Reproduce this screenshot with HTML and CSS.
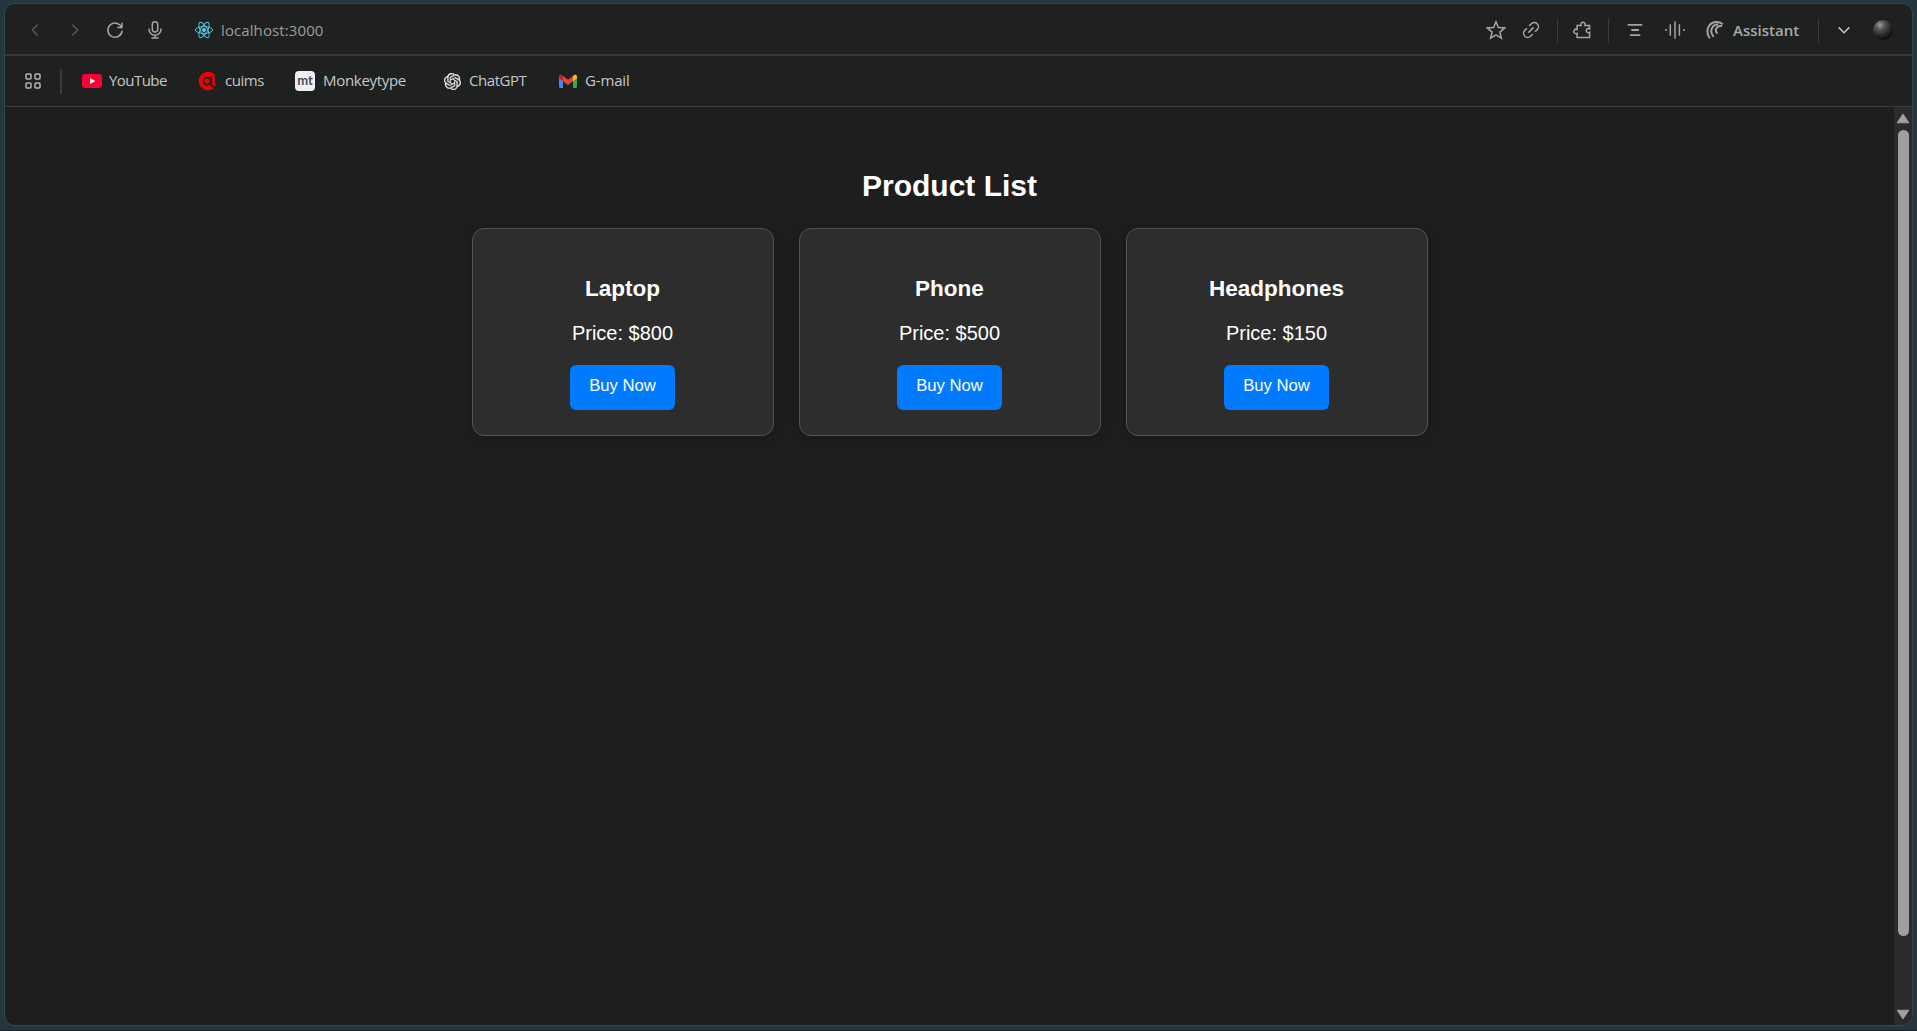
FILE: index.html
```html
<!DOCTYPE html>
<html lang="en">
<head>
<meta charset="utf-8">
<title>Product List</title>
<link rel="stylesheet" href="styles.css">
</head>
<body>
<div class="window">
  <header class="toolbar">
    <nav class="nav">
      <svg class="icon dim" viewBox="0 0 20 20"><path d="M12.8 4.5 7.3 10l5.5 5.5"/></svg>
      <svg class="icon dim" viewBox="0 0 20 20"><path d="M7.2 4.5 12.7 10l-5.5 5.5"/></svg>
      <svg class="icon" viewBox="0 0 20 20"><path d="M16.6 7.5A7.1 7.1 0 1 0 17.1 10.6M17 2.8v4.800h-4.800"/></svg>
      <svg class="icon" viewBox="0 0 20 20"><rect x="7.3" y="1.7" width="5.4" height="10.3" rx="2.7"/><path d="M4 8.5v.8a6 6 0 0 0 12 0v-.8M10 15.3V18M6.4 18h7.2"/></svg>
    </nav>
    <div class="address">
      <svg class="react" viewBox="0 0 20 20"><circle class="core" cx="10" cy="10" r="1.6"/><ellipse cx="10" cy="10" rx="8.6" ry="3.4"/><ellipse cx="10" cy="10" rx="8.6" ry="3.4" transform="rotate(60 10 10)"/><ellipse cx="10" cy="10" rx="8.6" ry="3.4" transform="rotate(120 10 10)"/></svg>
      <span class="url">localhost:3000</span>
    </div>
    <div class="actions">
      <svg class="icon star" viewBox="0 0 20 20"><path d="m10 1.700 2.400 5.800 6.300.5-4.800 4.100 1.500 6.100L10 14.900l-5.400 3.300 1.500-6.100L1.300 8l6.300-.5z"/></svg>
      <svg class="icon link" viewBox="0 0 20 20"><path d="M8.200 5.900 10.400 3.800a4 4 0 0 1 5.800 5.800l-2.200 2.200M11.800 14.100l-2.200 2.100a4 4 0 0 1-5.800-5.800L6 8.200M7.400 12.600l5.200-5.200"/></svg>
      <i class="rule"></i>
      <svg class="icon puzzle" viewBox="0 0 20 20"><path d="M4.100 5.400H8a2.200 2.200 0 1 1 4 0h4.600v3.400a2.100 2.100 0 1 0 0 3.500v5.200H4.100v-4.200a2.200 2.200 0 1 1 0-3.800z"/></svg>
      <i class="rule"></i>
      <svg class="icon lines" viewBox="0 0 20 20"><path d="M2.700 4.900h14.600M6.300 10h7.600M4.900 15.100h10.400"/></svg>
      <svg class="icon wave" viewBox="0 0 20 20"><path d="M1 9v2M5.300 4.200v11.600M10 1.300v17.400M14.400 4.200v11.600M19 9v2"/></svg>
      <svg class="icon swirl" viewBox="0 0 20 20"><path d="M4.700 18.200C-.2 11 3.300 2.700 11 2.100c2.800-.2 4.700.5 6.700 2.200M8.700 16.700C3.800 11.500 7 4.400 13.200 4.600M12.300 13.600c-3.200-4-.7-7.700 4.800-7.800"/></svg>
      <span class="assistant">Assistant</span>
      <i class="rule"></i>
      <svg class="icon chevron" viewBox="0 0 20 20"><path d="m4.700 7.400 5.300 5.300 5.300-5.300"/></svg>
      <i class="avatar"></i>
    </div>
  </header>
  <div class="bookmarks">
    <svg class="icon apps" viewBox="0 0 20 20"><rect x="3" y="3" width="5" height="5" rx="1"/><rect x="12" y="3" width="5" height="5" rx="1"/><rect x="3" y="12" width="5" height="5" rx="1"/><rect x="12" y="12" width="5" height="5" rx="1"/></svg>
    <i class="rule bright"></i>
    <a class="mark youtube"><svg viewBox="0 0 20 20"><rect y="3" width="20" height="14" rx="3.300" fill="#ff0033"/><path d="m8 7.100 5.200 2.900L8 12.900z" fill="#fff"/></svg><span>YouTube</span></a>
    <a class="mark cuims"><svg viewBox="0 0 20 20"><path fill="#f20000" d="M15.800 2.700A9.300 9.300 0 1 0 16 17.200l-2-2.600V4.500z"/><circle cx="9" cy="10.200" r="3.600" fill="none" stroke="#1f2120" stroke-width="1.900"/><path d="M13.100 5.500v8.200q0 1.700 1.400 2.300" fill="none" stroke="#1f2120" stroke-width="1.700"/><path d="M15.500 3.200v9.600q0 1.400 2 1.300" fill="none" stroke="#f20000" stroke-width="2.500"/></svg><span>cuims</span></a>
    <a class="mark monkey"><b class="mt">mt</b><span>Monkeytype</span></a>
    <a class="mark chat"><svg viewBox="0 0 24 24"><path fill="#ececec" stroke="#ececec" stroke-width=".4" d="M22.2819 9.8211a5.9847 5.9847 0 0 0-.5157-4.9108 6.0462 6.0462 0 0 0-6.5098-2.9A6.0651 6.0651 0 0 0 4.9807 4.1818a5.9847 5.9847 0 0 0-3.9977 2.9 6.0462 6.0462 0 0 0 .7427 7.0966 5.98 5.98 0 0 0 .511 4.9107 6.051 6.051 0 0 0 6.5146 2.9001A5.9847 5.9847 0 0 0 13.2599 24a6.0557 6.0557 0 0 0 5.7718-4.2058 5.9894 5.9894 0 0 0 3.9977-2.9001 6.0557 6.0557 0 0 0-.7475-7.0729zm-9.022 12.6081a4.4755 4.4755 0 0 1-2.8764-1.0408l.1419-.0804 4.7783-2.7582a.7948.7948 0 0 0 .3927-.6813v-6.7369l2.02 1.1686a.071.071 0 0 1 .038.052v5.5826a4.504 4.504 0 0 1-4.4945 4.4944zm-9.6607-4.1254a4.4708 4.4708 0 0 1-.5346-3.0137l.142.0852 4.783 2.7582a.7712.7712 0 0 0 .7806 0l5.8428-3.3685v2.3324a.0804.0804 0 0 1-.0332.0615L9.74 19.9502a4.4992 4.4992 0 0 1-6.1408-1.6464zM2.3408 7.8956a4.485 4.485 0 0 1 2.3655-1.9728V11.6a.7664.7664 0 0 0 .3879.6765l5.8144 3.3543-2.0201 1.1685a.0757.0757 0 0 1-.071 0l-4.8303-2.7865A4.504 4.504 0 0 1 2.3408 7.872zm16.5963 3.8558L13.1038 8.364 15.1192 7.2a.0757.0757 0 0 1 .071 0l4.8303 2.7913a4.4944 4.4944 0 0 1-.6765 8.1042v-5.6772a.79.79 0 0 0-.407-.667zm2.0107-3.0231l-.142-.0852-4.7735-2.7818a.7759.7759 0 0 0-.7854 0L9.409 9.2297V6.8974a.0662.0662 0 0 1 .0284-.0615l4.8303-2.7866a4.4992 4.4992 0 0 1 6.6802 4.66zM8.3065 12.863l-2.02-1.1638a.0804.0804 0 0 1-.038-.0567V6.0742a4.4992 4.4992 0 0 1 7.3757-3.4537l-.142.0805L8.704 5.459a.7948.7948 0 0 0-.3927.6813zm1.0976-2.3654l2.602-1.4998 2.6069 1.4998v2.9994l-2.5974 1.4997-2.6067-1.4997Z"/></svg><span>ChatGPT</span></a>
    <a class="mark gmail"><svg viewBox="0 0 20 20"><path fill="#4285f4" d="M1 5v10.700c0 .7.5 1.200 1.200 1.200H5V8.500z"/><path fill="#34a853" d="M15 8.500v8.400h2.800c.7 0 1.200-.5 1.200-1.200V5z"/><path fill="#c5221f" d="M1 5.300v1.900l4 3V5L4 4.100C2.800 3.200 1 4 1 5.300z"/><path fill="#fbbc04" d="M19 5.300v1.900l-4 3V5l1-.9c1.200-.9 3-.1 3 1.200z"/><path fill="#ea4335" d="m5 5 5 3.800L15 5v5.200L10 14l-5-3.800z"/></svg><span>G-mail</span></a>
  </div>
  <div class="viewport">
    <main class="page">
      <h2 class="title">Product List</h2>
      <section class="products">
        <article class="card"><h3 class="name">Laptop</h3><p class="price">Price: $800</p><button class="buy">Buy Now</button></article>
        <article class="card"><h3 class="name">Phone</h3><p class="price">Price: $500</p><button class="buy">Buy Now</button></article>
        <article class="card"><h3 class="name">Headphones</h3><p class="price">Price: $150</p><button class="buy">Buy Now</button></article>
      </section>
    </main>
    <div class="scrollbar">
      <svg class="arrow" viewBox="0 0 12 10"><path d="M6 1.300 11 8.800H1z"/></svg>
      <i class="thumb"></i>
      <svg class="arrow" viewBox="0 0 12 10"><path d="M6 8.700 11 1.200H1z"/></svg>
    </div>
  </div>
</div>
</body>
</html>
```
FILE: styles.css
```css
* { box-sizing: border-box; }

html { background: #26363f; overflow: hidden; }

body {
  margin: 0;
  height: 1031px;
  padding: 3px 4px 5px;
  background: #26363f;
  border-bottom: 1px solid #1d2029;
  overflow: hidden;
  font-family: "Open Sans", "Noto Sans", sans-serif;
}

.window {
  width: 1909px;
  height: 1023px;
  display: flex;
  flex-direction: column;
  border: 1px solid #2c4a58;
  border-radius: 11px;
  background: #1e1e1e;
  overflow: hidden;
}

.toolbar {
  display: flex;
  align-items: center;
  flex: 0 0 52px;
  padding: 2px 0 0 20px;
  background: #1f2120;
  border-bottom: 2px solid #383a39;
}

.icon {
  flex: none;
  width: 20px;
  height: 20px;
  fill: none;
  stroke: #a3a5a4;
  stroke-width: 1.5;
}
.dim { stroke: #555756; }
.nav { display: flex; gap: 20px; }

.address {
  display: flex;
  align-items: center;
  margin-left: 29px;
}
.react {
  width: 20px;
  height: 20px;
  fill: none;
  stroke: #58c4dc;
  stroke-width: 1;
}
.core { fill: #58c4dc; }
.url {
  margin-left: 7px;
  font-size: 15px;
  letter-spacing: .1px;
  line-height: 20px;
  color: #9b9d9c;
}

.actions {
  display: flex;
  align-items: center;
  margin-left: auto;
  padding-right: 19px;
}
.link { margin-left: 15px; }
.rule {
  flex: none;
  width: 1px;
  height: 25px;
  background: #3a3c3b;
}
.link + .rule { margin-left: 16px; }
.puzzle { margin: 0 15px 0 15px; }
.lines { margin-left: 16px; stroke-width: 1.8; }
.wave { margin-left: 20px; }
.swirl { margin-left: 20px; stroke-width: 2; }
.assistant {
  width: 68px;
  margin: 0 17px 0 8px;
  font-size: 15px;
  font-weight: 600;
  line-height: 20px;
  white-space: nowrap;
  color: #a7a9a8;
}
.chevron { margin-left: 15px; stroke: #bfc1c0; }
.avatar {
  width: 20px;
  height: 20px;
  margin-left: 19px;
  border-radius: 50%;
  background: radial-gradient(circle at 35% 25%, #a09f9d 0, #5a5a5a 22%, #2d2d2d 50%, #090909 78%);
}

.bookmarks {
  display: flex;
  align-items: center;
  flex: 0 0 51px;
  padding-left: 18px;
  background: #1f2120;
  border-bottom: 1px solid #3a3c3b;
  font-size: 15px;
  line-height: 20px;
  color: #c6c8c7;
}
.apps { stroke: #b5b7b6; }
.bright { width: 2px; margin-left: 17px; }
.mark {
  display: flex;
  align-items: center;
  gap: 7px;
  white-space: nowrap;
}
.mark svg { width: 20px; height: 20px; flex: none; }
.mark span { padding-bottom: 2px; }
.youtube { width: 116px; margin-left: 20px; letter-spacing: -.55px; }
.cuims { width: 97px; letter-spacing: -.45px; }
.monkey { width: 149px; gap: 8px; letter-spacing: -.3px; }
.chat { width: 114px; letter-spacing: -.45px; }
.mark.chat svg { width: 17px; height: 17px; margin-right: 1px; }
.gmail { letter-spacing: -.15px; }
.mt {
  width: 20px;
  height: 20px;
  border-radius: 4px;
  background: #f0f0f2;
  color: #4a4c50;
  font: 700 13px/18px Lato, sans-serif;
  letter-spacing: 0;
  text-align: center;
}

.viewport { flex: 1; display: flex; min-height: 0; }
.page {
  flex: 1;
  padding-top: 61px;
  font-family: "Liberation Sans", Arial, sans-serif;
  color: #fff;
  text-align: center;
}
.title { margin: 0; font-size: 30px; line-height: 35px; }
.products {
  display: flex;
  justify-content: center;
  gap: 25px;
  margin-top: 25px;
}
.card {
  width: 302px;
  height: 208px;
  padding-top: 46px;
  border: 1px solid #535353;
  border-radius: 12px;
  background: #2d2d2d;
  box-shadow: 0 2px 12px rgba(0, 0, 0, .25);
}
.name { margin: 0; font-size: 22.5px; line-height: 28px; }
.price { margin: 19px 0 0; font-size: 20px; line-height: 23px; }
.buy {
  width: 105px;
  height: 45px;
  margin: 20px 0 0;
  padding: 0 0 3px;
  border: 0;
  border-radius: 6px;
  background: #007bff;
  color: #fff;
  font: 16.67px "Liberation Sans", Arial, sans-serif;
}

.scrollbar {
  flex: 0 0 18px;
  display: flex;
  flex-direction: column;
  align-items: center;
  padding: 6px 0 5px;
  background: #2b2b2b;
}
.arrow { width: 14px; height: 11px; fill: #a0a0a0; stroke: #a0a0a0; stroke-linejoin: round; }
.thumb {
  width: 11px;
  height: 806px;
  margin: 6px 0 auto;
  border-radius: 6px;
  background: #9f9f9f;
}
```
